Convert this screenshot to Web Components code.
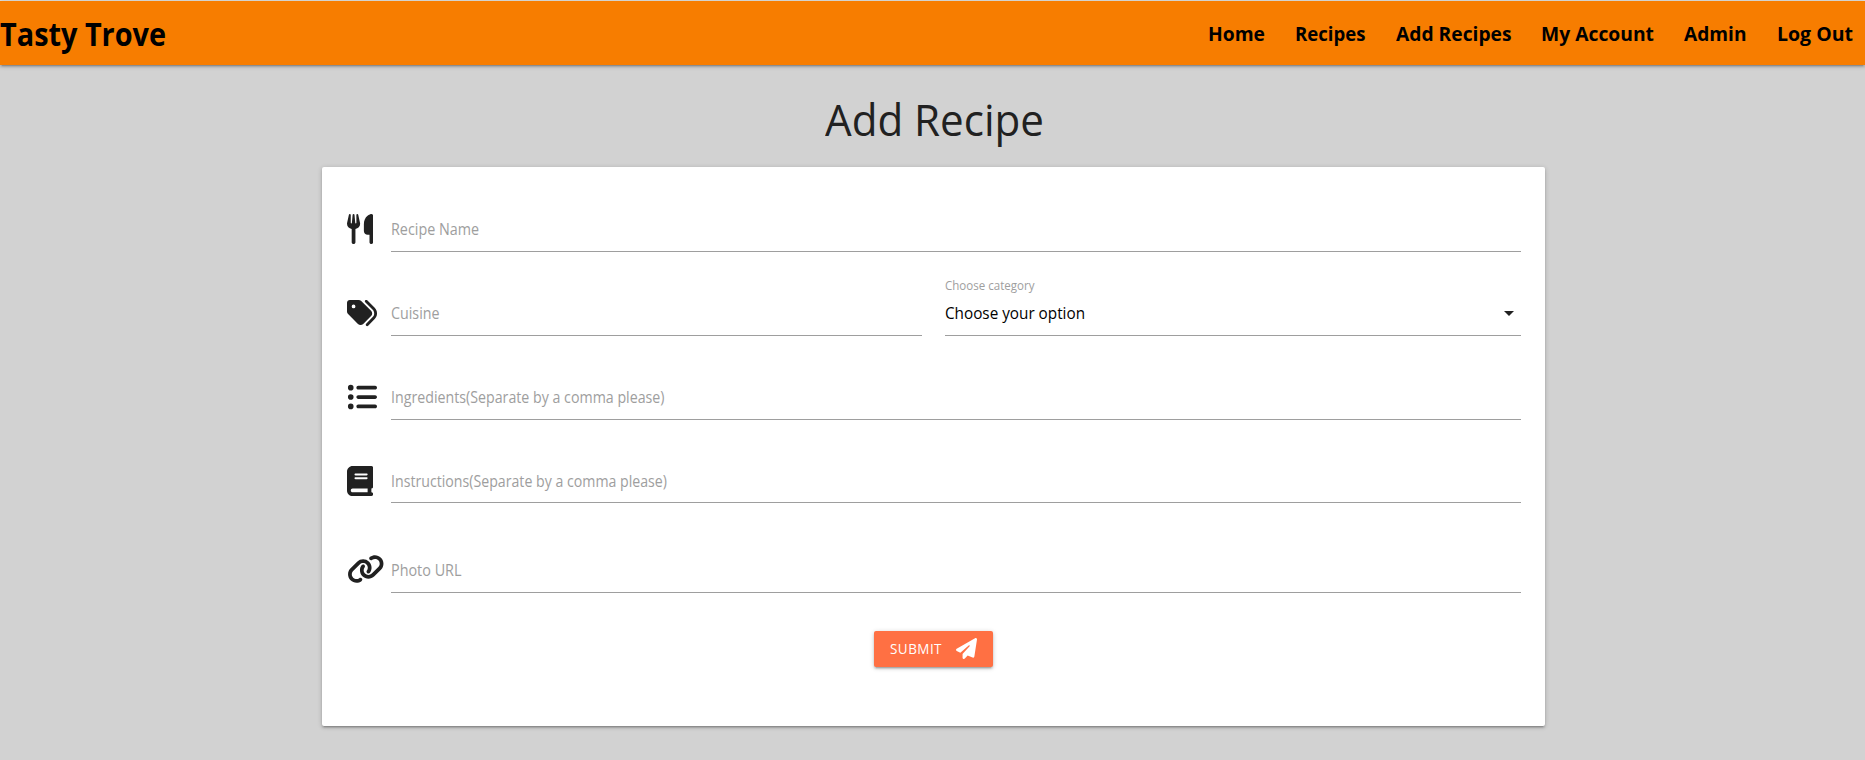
<!DOCTYPE html>
<html lang="en">
<head>
<meta charset="utf-8">
<title>Tasty Trove - Add Recipe</title>
<style>
html, body { margin: 0; height: 100%; }
body { background: #d2d2d2; color: #212121; font-family: "Open Sans", "Noto Sans", sans-serif; overflow: hidden; }
</style>
</head>
<body>
<recipe-app></recipe-app>
<script>
const define = (name, html, setup) => customElements.define(name, class extends HTMLElement {
  connectedCallback() {
    if (this.shadowRoot) return;
    const root = this.attachShadow({ mode: "open" });
    root.innerHTML = html;
    if (setup) setup(this, root);
  }
});

/* Text set to a given advance width. */
define("fit-text", `<style>
  :host { display: block; flex: none; white-space: nowrap; }
  span { display: inline-block; transform-origin: 0 50%; white-space: nowrap; }
</style><span><slot></slot></span>`, (el, root) => {
  const span = root.querySelector("span");
  const w = +el.getAttribute("w");
  el.style.width = w + "px";
  span.style.transform = `scaleX(${w / span.getBoundingClientRect().width})`;
});

const ICONS = {
  utensils: [448, "M416 0C400 0 288 32 288 176V288c0 35.3 28.7 64 64 64h32V480c0 17.7 14.3 32 32 32s32-14.3 32-32V352 240 32c0-17.7-14.3-32-32-32zM64 16C64 7.8 57.9 1 49.7 .1S34.2 4.6 32.4 12.5L2.1 148.8C.7 155.1 0 161.5 0 167.9c0 45.9 35.1 83.6 80 87.7V480c0 17.7 14.3 32 32 32s32-14.3 32-32V255.6c44.9-4.1 80-41.8 80-87.7c0-6.4-.7-12.8-2.1-19.1L191.6 12.5c-1.8-8-9.3-13.3-17.4-12.4S160 7.8 160 16V150.2c0 5.4-4.4 9.8-9.8 9.8c-5.1 0-9.3-3.9-9.8-9L127.9 14.6C127.2 6.3 120.3 0 112 0s-15.2 6.3-15.9 14.6L83.7 151c-.5 5.1-4.7 9-9.8 9c-5.4 0-9.8-4.4-9.8-9.8V16z"],
  tags: [512, "M345 39.1L472.8 168.4c52.4 53 52.4 138.2 0 191.2L360.8 472.9c-9.3 9.4-24.5 9.5-33.9 .2s-9.5-24.5-.2-33.9L438.6 325.9c33.9-34.3 33.9-89.4 0-123.7L310.9 72.9c-9.3-9.4-9.2-24.6 .2-33.9s24.6-9.2 33.9 .2zM0 229.5V80C0 53.5 21.5 32 48 32H197.5c17 0 33.3 6.7 45.3 18.7l168 168c25 25 25 65.5 0 90.5L277.3 442.7c-25 25-65.5 25-90.5 0l-168-168C6.7 262.7 0 246.5 0 229.5zM144 144a32 32 0 1 0 -64 0 32 32 0 1 0 64 0z"],
  list: [512, "M64 144a48 48 0 1 0 0-96 48 48 0 1 0 0 96zM192 64c-17.7 0-32 14.3-32 32s14.3 32 32 32H480c17.7 0 32-14.3 32-32s-14.3-32-32-32H192zm0 160c-17.7 0-32 14.3-32 32s14.3 32 32 32H480c17.7 0 32-14.3 32-32s-14.3-32-32-32H192zm0 160c-17.7 0-32 14.3-32 32s14.3 32 32 32H480c17.7 0 32-14.3 32-32s-14.3-32-32-32H192zM64 464a48 48 0 1 0 0-96 48 48 0 1 0 0 96zm48-208a48 48 0 1 0 -96 0 48 48 0 1 0 96 0z"],
  book: [448, "M96 0C43 0 0 43 0 96V416c0 53 43 96 96 96H384h32c17.7 0 32-14.3 32-32s-14.3-32-32-32V384c17.7 0 32-14.3 32-32V32c0-17.7-14.3-32-32-32H384 96zm0 384H352v64H96c-17.7 0-32-14.3-32-32s14.3-32 32-32zm32-240c0-8.8 7.2-16 16-16H336c8.8 0 16 7.2 16 16s-7.2 16-16 16H144c-8.8 0-16-7.2-16-16zm16 48H336c8.8 0 16 7.2 16 16s-7.2 16-16 16H144c-8.8 0-16-7.2-16-16s7.2-16 16-16z"],
  link: [640, "M579.8 267.7c56.5-56.5 56.5-148 0-204.5c-50-50-128.8-56.5-186.3-15.4l-1.6 1.1c-14.4 10.3-17.7 30.3-7.4 44.6s30.3 17.7 44.6 7.4l1.6-1.1c32.1-22.9 76-19.3 103.8 8.6c31.5 31.5 31.5 82.5 0 114L422.3 334.8c-31.5 31.5-82.5 31.5-114 0c-27.9-27.9-31.5-71.8-8.6-103.8l1.1-1.6c10.3-14.4 6.9-34.4-7.4-44.6s-34.4-6.9-44.6 7.4l-1.1 1.6C206.5 251.2 213 330 263 380c56.5 56.5 148 56.5 204.5 0L579.8 267.7zM60.2 244.3c-56.5 56.5-56.5 148 0 204.5c50 50 128.8 56.5 186.3 15.4l1.6-1.1c14.4-10.3 17.7-30.3 7.4-44.6s-30.3-17.7-44.6-7.4l-1.6 1.1c-32.1 22.9-76 19.3-103.8-8.6C74 372 74 321 105.5 289.5L217.7 177.2c31.5-31.5 82.5-31.5 114 0c27.9 27.9 31.5 71.8 8.6 103.9l-1.1 1.6c-10.3 14.4-6.9 34.4 7.4 44.6s34.4 6.9 44.6-7.4l1.1-1.6C433.5 260.8 427 182 377 132c-56.5-56.5-148-56.5-204.5 0L60.2 244.3z"],
  plane: [512, "M498.1 5.6c10.1 7 15.4 19.1 13.5 31.2l-64 416c-1.5 9.7-7.4 18.2-16 23s-18.9 5.4-28 1.6L284 427.7l-68.5 74.1c-8.9 9.7-22.9 12.9-35.2 8.1S160 493.2 160 480V396.4c0-4 1.5-7.8 4.2-10.7L331.8 202.8c5.8-6.3 5.6-16-.4-22s-15.7-6.4-22-.7L106 360.8 17.7 316.6C7.1 311.3 .3 300.7 0 288.9s5.9-22.8 16.1-28.7l448-256c10.7-6.1 23.9-5.5 34 1.4z"]
};
define("ui-icon", `<style>:host { display: block; flex: none; line-height: 0; } svg { display: block; fill: currentColor; }</style>
<svg><path/></svg>`, (el, root) => {
  const [w, d] = ICONS[el.getAttribute("name")];
  const size = +(el.getAttribute("size") || 30);
  const svg = root.querySelector("svg");
  svg.setAttribute("viewBox", `0 0 ${w} 512`);
  svg.setAttribute("width", w * size / 512);
  svg.setAttribute("height", size);
  root.querySelector("path").setAttribute("d", d);
});

define("site-nav", `<style>
  :host { display: flex; box-sizing: border-box; justify-content: space-between; height: 64px; margin-top: 1px; background: #f77d00; color: #000;
    box-shadow: 0 2px 2px 0 rgba(0,0,0,.14), 0 3px 1px -2px rgba(0,0,0,.12), 0 1px 5px 0 rgba(0,0,0,.2); line-height: 64px; }
  .brand { font-size: 31.5px; font-weight: 700; padding-top: 1px; }
  nav { display: flex; gap: 30px; padding: 1px 12.5px 0 0; font-size: 19.5px; font-weight: 700; }
</style>
<fit-text class="brand" w="166">Tasty Trove</fit-text>
<nav>
  <fit-text w="57">Home</fit-text><fit-text w="70.5">Recipes</fit-text><fit-text w="115.5">Add Recipes</fit-text>
  <fit-text w="113">My Account</fit-text><fit-text w="62.5">Admin</fit-text><fit-text w="76">Log Out</fit-text>
</nav>`);

define("form-field", `<style>
  :host { display: flex; flex: 1; box-sizing: border-box; height: var(--h, 84px); align-items: flex-end; }
  .icon { width: 45px; height: var(--ih, 38px); padding-left: .7px; box-sizing: border-box; flex: none; }
  .control { flex: 1; display: flex; align-items: flex-end; justify-content: space-between; box-sizing: border-box; height: 46px; padding-bottom: var(--pb, 12px);
    border-bottom: 1px solid #9e9e9e; font-size: 15.5px; line-height: 20px; color: #9e9e9e; }
</style>
<div class="icon"><slot name="icon"></slot></div>
<div class="control"><slot></slot></div>`);

define("select-field", `<style>
  :host { display: flex; flex-direction: column; justify-content: flex-end; width: 576px; height: 84px; flex: none; }
  .label { font-size: 12.3px; line-height: 16px; color: #9e9e9e; }
  .control { display: flex; justify-content: space-between; box-sizing: border-box; height: 42px; padding-top: 9px;
    border-bottom: 1px solid #9e9e9e; font-size: 16px; line-height: 20px; color: #000; }
  svg { display: block; fill: #212121; margin: 8px 7px 0 0; }
</style>
<fit-text class="label" w="89.5">Choose category</fit-text>
<div class="control"><fit-text w="140">Choose your option</fit-text>
<svg width="10" height="5" viewBox="0 0 10 5"><path d="M0 0H10L5 5z"/></svg></div>`);

define("submit-button", `<style>
  :host { display: flex; box-sizing: border-box; width: 119px; height: 36px; padding: 0 16px; align-items: center; justify-content: space-between;
    background: #ff7043; color: #fff; border-radius: 2px; font-size: 14.3px; line-height: 34px; letter-spacing: .5px;
    box-shadow: 0 2px 2px 0 rgba(0,0,0,.14), 0 3px 1px -2px rgba(0,0,0,.12), 0 1px 5px 0 rgba(0,0,0,.2); }
  ui-icon { padding-bottom: 1px; }
</style>
<fit-text w="52">SUBMIT</fit-text><ui-icon name="plane" size="21"></ui-icon>`);

define("form-card", `<style>
  :host { display: flex; flex-direction: column; box-sizing: border-box; width: 1223px; height: 559px; margin: 0 auto 0 322px; padding: 0 24px; background: #fff; border-radius: 2px;
    box-shadow: 0 2px 2px 0 rgba(0,0,0,.14), 0 3px 1px -2px rgba(0,0,0,.12), 0 1px 5px 0 rgba(0,0,0,.2); }
</style><slot></slot>`);

define("recipe-app", `<style>
  :host { display: flex; flex-direction: column; height: 760px; background: linear-gradient(#e0e0dc 1px, #d2d2d2 1px); }
  .title { margin: 0; height: 102px; display: flex; justify-content: center; font-size: 43.5px; font-weight: 400; line-height: 60px; padding: 25px 0 0 3px; box-sizing: border-box; }
  .row { display: flex; gap: 23px; flex: none; }
  submit-button { margin: 38px auto 0; }
</style>
<site-nav></site-nav>
<h1 class="title"><fit-text w="219">Add Recipe</fit-text></h1>
<form-card>
  <div class="row" style="--h:85px"><form-field><ui-icon slot="icon" name="utensils"></ui-icon><fit-text w="88">Recipe Name</fit-text></form-field></div>
  <div class="row"><form-field><ui-icon slot="icon" name="tags"></ui-icon><fit-text w="48.5">Cuisine</fit-text></form-field><select-field></select-field></div>
  <div class="row"><form-field style="--ih:38.5px"><ui-icon slot="icon" name="list"></ui-icon><fit-text w="273.5">Ingredients(Separate by a comma please)</fit-text></form-field></div>
  <div class="row" style="--h:83px;--ih:37px;--pb:11px"><form-field><ui-icon slot="icon" name="book"></ui-icon><fit-text w="276">Instructions(Separate by a comma please)</fit-text></form-field></div>
  <div class="row" style="--h:90px;--ih:39.5px"><form-field><ui-icon slot="icon" name="link"></ui-icon><fit-text w="70.5">Photo URL</fit-text></form-field></div>
  <submit-button></submit-button>
</form-card>`);
</script>
</body>
</html>
